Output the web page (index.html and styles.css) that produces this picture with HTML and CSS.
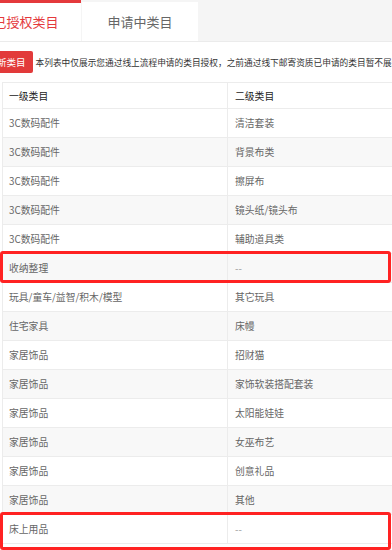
FILE: index.html
```html
<!DOCTYPE html>
<html lang="zh-CN">
<head>
<meta charset="utf-8">
<title>类目授权</title>
<link rel="stylesheet" href="styles.css">
</head>
<body>
<div class="screen">
  <div class="tabs">
    <div class="tab tab-active">已授权类目</div>
    <div class="tab">申请中类目</div>
  </div>
  <div class="toolbar">
    <button class="btn-new">申请新类目</button>
    <span class="notice">本列表中仅展示您通过线上流程申请的类目授权，之前通过线下邮寄资质已申请的类目暂不展示</span>
  </div>
  <div class="table">
    <div class="row head"><div class="cell">一级类目</div><div class="cell">二级类目</div></div>
    <div class="row"><div class="cell">3C数码配件</div><div class="cell">清洁套装</div></div>
    <div class="row"><div class="cell">3C数码配件</div><div class="cell">背景布类</div></div>
    <div class="row"><div class="cell">3C数码配件</div><div class="cell">擦屏布</div></div>
    <div class="row"><div class="cell">3C数码配件</div><div class="cell">镜头纸/镜头布</div></div>
    <div class="row"><div class="cell">3C数码配件</div><div class="cell">辅助道具类</div></div>
    <div class="row"><div class="cell">收纳整理</div><div class="cell empty">--</div></div>
    <div class="row"><div class="cell">玩具/童车/益智/积木/模型</div><div class="cell">其它玩具</div></div>
    <div class="row"><div class="cell">住宅家具</div><div class="cell">床幔</div></div>
    <div class="row"><div class="cell">家居饰品</div><div class="cell">招财猫</div></div>
    <div class="row"><div class="cell">家居饰品</div><div class="cell">家饰软装搭配套装</div></div>
    <div class="row"><div class="cell">家居饰品</div><div class="cell">太阳能娃娃</div></div>
    <div class="row"><div class="cell">家居饰品</div><div class="cell">女巫布艺</div></div>
    <div class="row"><div class="cell">家居饰品</div><div class="cell">创意礼品</div></div>
    <div class="row"><div class="cell">家居饰品</div><div class="cell">其他</div></div>
    <div class="row"><div class="cell">床上用品</div><div class="cell empty">--</div></div>
  </div>
  <div class="mark mark-1"></div>
  <div class="mark mark-2"></div>
</div>
</body>
</html>
```
FILE: styles.css
```css
html, body {
  margin: 0;
  padding: 0;
  background: #fff;
}
body {
  width: 392px;
  height: 550px;
  overflow: hidden;
  font-family: "Noto Sans CJK SC", "Noto Sans", sans-serif;
}
.screen {
  position: relative;
  width: 392px;
  height: 550px;
  overflow: hidden;
}
.tabs {
  display: flex;
  gap: 1px;
  height: 41px;
  margin-left: -29px;
  width: 460px;
  background: #f5f5f5;
  border-bottom: 1px solid #ebebeb;
}
.tab {
  width: 116px;
  margin-top: 2px;
  background: #fff;
  display: flex;
  align-items: center;
  justify-content: center;
  font-size: 13px;
  color: #666;
}
.tab-active {
  width: 110px;
  margin-top: 0;
  border-top: 3px solid #e4393c;
  color: #e4393c;
  box-sizing: border-box;
  padding-bottom: 1px;
}
.toolbar {
  display: flex;
  align-items: center;
  gap: 3px;
  height: 40px;
  margin-left: -29px;
  white-space: nowrap;
}
.btn-new {
  height: 22px;
  padding: 0 7px;
  border: none;
  border-radius: 2px;
  background: #e23a3a;
  color: #fff;
  font-family: inherit;
  font-size: 9.5px;
  line-height: 22px;
}
.notice {
  font-size: 8.7px;
  color: #333;
}
.table {
  margin-left: 2px;
  width: 460px;
  border-left: 1px solid #ececec;
  border-top: 1px solid #ececec;
  font-size: 9.8px;
  color: #666;
}
.row {
  display: grid;
  grid-template-columns: 225px 1fr;
  height: 29px;
  box-sizing: border-box;
  border-bottom: 1px solid #ececec;
}
.row:nth-child(odd) {
  background: #f8f8f8;
}
.row.head {
  height: 26px;
  background: #fff;
  color: #222;
}
.cell {
  display: flex;
  align-items: center;
  padding-left: 6px;
  white-space: nowrap;
}
.cell:first-child {
  border-right: 1px solid #ececec;
}
.cell + .cell {
  padding-left: 7px;
}
.empty {
  color: #999;
}
.mark {
  position: absolute;
  left: 0;
  width: 391px;
  box-sizing: border-box;
  border: 3px solid #ff2222;
  border-radius: 3px;
}
.mark-1 {
  top: 251px;
  height: 32px;
}
.mark-2 {
  top: 512px;
  height: 38px;
}
```
